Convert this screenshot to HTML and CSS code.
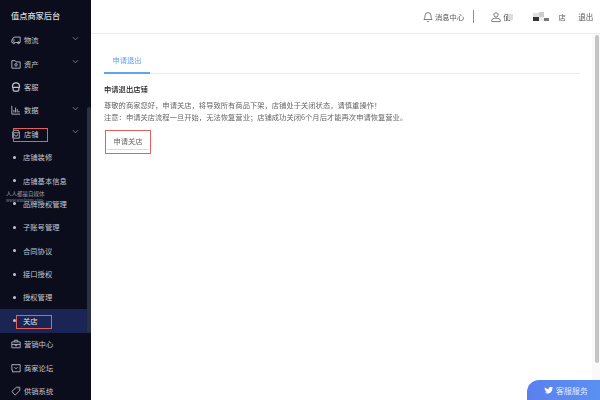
FILE: index.html
```html
<!DOCTYPE html>
<html lang="zh">
<head>
<meta charset="utf-8">
<title>值点商家后台</title>
<link rel="stylesheet" href="styles.css">
</head>
<body>
<div class="app">
  <aside class="sidebar">
    <div class="logo">值点商家后台</div>
    <nav class="menu">
      <div class="item">
        <svg class="ico" viewBox="0 0 12 12"><path d="M3.500 2.500h7.500v6.500H5M3.500 2.500L1 6v3h.8M1.500 6h3"/><circle cx="3.300" cy="9.300" r="1.200"/><circle cx="9" cy="9.300" r="1.200"/></svg>
        <span class="label">物流</span>
        <svg class="chev" viewBox="0 0 8 5"><path d="M1 1l3 3 3-3"/></svg>
      </div>
      <div class="item">
        <svg class="ico" viewBox="0 0 12 12"><path d="M1 2h4l1 1.500h5V11H1z"/><circle cx="6" cy="7" r="1.500"/></svg>
        <span class="label">资产</span>
        <svg class="chev" viewBox="0 0 8 5"><path d="M1 1l3 3 3-3"/></svg>
      </div>
      <div class="item">
        <svg class="ico strong" viewBox="0 0 12 12"><path d="M1.800 7V5.200a4.200 4.200 0 0 1 8.400 0V7M1.800 6.500h8.400M2.500 6.500v2.800q0 1.700 1.700 1.700h3.600q1.700 0 1.700-1.700V6.500"/></svg>
        <span class="label">客服</span>
      </div>
      <div class="item">
        <svg class="ico" viewBox="0 0 12 12"><path d="M1 1v10h10M3.500 9V6M5.500 9V3M7.500 9V5M9.500 9V7"/></svg>
        <span class="label">数据</span>
        <svg class="chev" viewBox="0 0 8 5"><path d="M1 1l3 3 3-3"/></svg>
      </div>
      <div class="item">
        <svg class="ico" viewBox="0 0 12 12"><path d="M2 4.500L3 1.500h6l1 3v6.500H2zM2 4.500h8M4 6.500a2 2 0 0 0 4 0"/></svg>
        <span class="label">店铺</span>
        <svg class="chev" viewBox="0 0 8 5"><path d="M1 1l3 3 3-3"/></svg>
        <i class="mark mark-shop"></i>
      </div>
      <div class="sub"><i class="dot"></i><span>店铺装修</span></div>
      <div class="sub"><i class="dot"></i><span>店铺基本信息</span></div>
      <div class="sub"><i class="dot"></i><span>品牌授权管理</span>
        <div class="watermark">人人都是自媒体<br><em>www.woshipm.com</em></div>
      </div>
      <div class="sub"><i class="dot"></i><span>子账号管理</span></div>
      <div class="sub"><i class="dot"></i><span>合同协议</span></div>
      <div class="sub"><i class="dot"></i><span>接口授权</span></div>
      <div class="sub"><i class="dot"></i><span>授权管理</span></div>
      <div class="sub active"><i class="dot"></i><span>关店</span><i class="mark mark-close"></i></div>
      <div class="item">
        <svg class="ico" viewBox="0 0 12 12"><path d="M1 3.500h10v7H1zM4 3.500v-2h4v2M1 6.500h10M5 6.500V8h2V6.500"/></svg>
        <span class="label">营销中心</span>
      </div>
      <div class="item">
        <svg class="ico" viewBox="0 0 12 12"><path d="M1 2h10v8.500H4L2 11V8.500H1zM4 5l2 2 2-2"/></svg>
        <span class="label">商家论坛</span>
      </div>
      <div class="item">
        <svg class="ico" viewBox="0 0 12 12"><path d="M1 6.500L6.500 1.500h4v4L5 11zM8 3.500h.6"/></svg>
        <span class="label">供销系统</span>
      </div>
    </nav>
    <div class="side-scroll"></div>
  </aside>
  <div class="main">
    <header class="topbar">
      <svg class="top-ico" viewBox="0 0 12 13"><path d="M6 1.200a3.600 3.600 0 0 0-3.600 3.600c0 3.400-1.300 4.700-1.300 4.700h9.800S9.600 8.200 9.600 4.800A3.600 3.600 0 0 0 6 1.200zM4.800 11.300a1.300 1.300 0 0 0 2.400 0"/></svg>
      <span class="top-text msg">消息中心</span>
      <i class="sep"></i>
      <svg class="top-ico user" viewBox="0 0 12 13"><circle cx="6" cy="4" r="2.600"/><path d="M1 12v-1.800C1 8.800 3 8 6 8s5 .8 5 2.200V12z"/></svg>
      <div class="shop">
        <span class="top-text">值</span><i class="blur b1"></i><i class="blur b2"></i><i class="blur b3"></i><i class="blur b4"></i><span class="top-text">店</span>
      </div>
      <span class="top-text logout">退出</span>
    </header>
    <div class="page">
      <main class="content">
        <div class="tabs"><div class="tab">申请退出</div></div>
        <h2 class="title">申请退出店铺</h2>
        <p class="desc">尊敬的商家您好，申请关店，将导致所有商品下架，店铺处于关闭状态，请慎重操作！</p>
        <p class="desc">注意：申请关店流程一旦开始，无法恢复营业；店铺成功关闭6个月后才能再次申请恢复营业。</p>
        <div class="btn-mark"><button class="btn">申请关店</button></div>
      </main>
      <div class="scrollbar"><div class="thumb"></div></div>
    </div>
    <div class="service">
      <svg class="bird" viewBox="0 0 14 12"><path d="M1 1.500c2 2.200 3.700 3 6 3.200C7 2.500 8.500 1 10.300 1c.9 0 1.500.4 2 .9l1.400-.5-.8 1.400 1-.2-.9 1.100C12.900 8 10 11.500 5.500 11.500c-1.700 0-3.200-.4-4.500-1.200 1.600.1 2.900-.3 4-1.100C3.500 9 2.200 8 1.800 6.800h1.100C1.500 6 .7 4.800.9 3.700l1.200.3C1.200 3.300.7 2.500 1 1.500z"/></svg>
      <span>客服服务</span>
    </div>
  </div>
</div>
</body>
</html>
```
FILE: styles.css
```css
* { box-sizing: border-box; }
html, body { margin: 0; padding: 0; width: 600px; height: 400px; overflow: hidden; background: #fff; }
body { font-family: "Noto Sans CJK SC", "Liberation Sans", sans-serif; font-size: 7.3px; color: #555; }
.app { display: flex; width: 600px; height: 400px; filter: blur(.3px); }

.sidebar { position: relative; flex: 0 0 91px; height: 400px; background: #0b0d1c; color: #c5c7cf; overflow: hidden; }
.logo { height: 28.5px; padding-top: 8px; padding-left: 11px; font-size: 8.2px; font-weight: 500; line-height: 14px; color: #d8d9de; }
.menu { display: flex; flex-direction: column; }
.item { display: flex; align-items: center; height: 23.4px; padding-left: 11px; position: relative; flex: none; }
.ico { width: 10px; height: 10px; fill: none; stroke: #c5c7cf; stroke-width: 1; flex: none; }
.ico.strong { stroke-width: 1.4; }
.label { margin-left: 3px; line-height: 12px; }
.chev { position: absolute; left: 72px; top: 7px; width: 7px; height: 5px; fill: none; stroke: #7d808c; stroke-width: 1; }
.mark { position: absolute; display: block; border: 1.5px solid #e5605a; height: 14px; }
.mark-shop { left: 13px; top: 6px; width: 35px; }
.mark-close { left: 16px; top: 6px; width: 36px; }
.sub { position: relative; display: flex; align-items: center; height: 23.4px; padding-left: 13px; flex: none; }
.dot { width: 3px; height: 3px; border-radius: 50%; background: #c5c7cf; margin-right: 7px; flex: none; }
.sub.active { background: #1a2553; color: #e4e6ee; }
.watermark { position: absolute; left: 6px; top: -1px; font-size: 5.5px; line-height: 6px; color: #9b9ca6; white-space: nowrap; }
.watermark em { font-style: normal; font-size: 4px; color: #83848d; }
.side-scroll { position: absolute; left: 87px; top: 107px; width: 3.500px; height: 226px; border-radius: 2px; background: #2c3042; }

.main { position: relative; flex: 1; display: flex; flex-direction: column; min-width: 0; }
.topbar { flex: 0 0 34px; display: flex; align-items: center; padding-left: 332px; border-bottom: 1px solid #ececec; }
.top-ico { width: 10px; height: 12px; fill: none; stroke: #555; stroke-width: .9; flex: none; }
.top-text { color: #555; line-height: 12px; }
.msg { margin-left: 2px; }
.sep { width: 1px; height: 13px; background: #8a8f99; margin: 0 17px 0 9px; flex: none; }
.user { margin-right: 2px; }
.shop { display: flex; align-items: center; width: 60px; height: 14px; }
.blur { display: block; flex: none; }
.b1 { width: 5px; height: 6px; background: #ddd; margin: 0 20px 0 -2px; }
.b2 { width: 6px; height: 8px; background: linear-gradient(#e0e0e0 50%, #333 50%); }
.b3 { width: 5px; height: 9px; background: linear-gradient(#ccc 60%, #eee 60%); }
.b4 { width: 5px; height: 3px; background: #777; margin: 5px 9px 0 0; }
.logout { margin-left: 15px; font-size: 7.5px; }

.page { flex: 1; display: flex; min-height: 0; }
.content { flex: 1; padding: 17px 12px 0 13px; min-width: 0; }
.scrollbar { flex: 0 0 8px; background: #f9f9f9; padding: 1px 1px 0 3px; }
.thumb { height: 328px; background: #c4c4c4; border-radius: 2px; }
.tabs { height: 23px; border-bottom: 1px solid #ececec; }
.tab { width: 46px; height: 23px; border-bottom: 2px solid #5ea3f5; color: #5ea3f5; line-height: 12px; text-align: center; padding-top: 3px; }
.title { margin: 9px 0 0; font-size: 7.3px; font-weight: 500; line-height: 12px; color: #222; }
.desc { margin: 4px 0 0; line-height: 12px; color: #666; white-space: nowrap; }
.desc + .desc { margin-top: 0; }
.btn-mark { width: 46px; height: 24px; margin: 7px 0 0 1px; border: 1.5px solid #e5605a; padding: 1px; }
.btn { display: block; width: 100%; height: 18px; padding: 0; background: #fff; border: 0; border-bottom: 1px solid #ddd; color: #666; font: inherit; line-height: 12px; }

.service { position: absolute; right: 0; bottom: 0; width: 73px; height: 20px; border-radius: 12px 0 0 0; background: linear-gradient(90deg, #5b80ee, #5a90f2); color: #e6edfd; display: flex; align-items: center; padding-left: 17px; font-size: 8px; }
.bird { width: 9px; height: 8px; fill: #fff; margin-right: 3px; flex: none; }
```
